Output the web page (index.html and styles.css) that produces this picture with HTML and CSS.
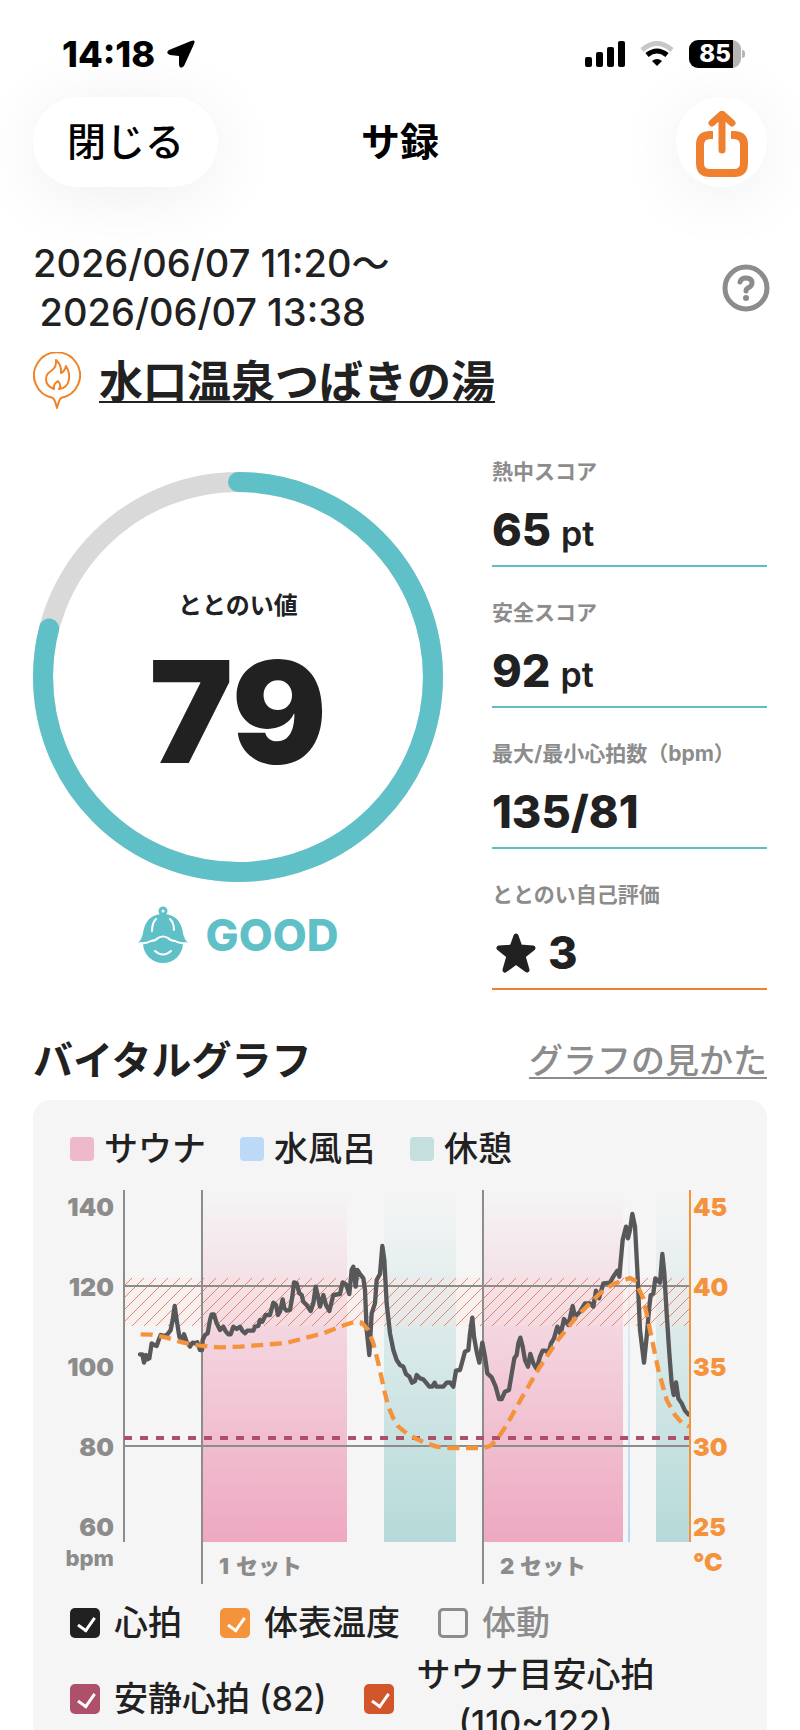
FILE: index.html
```html
<!DOCTYPE html>
<html lang="ja">
<head>
  <meta charset="UTF-8">
  <meta name="viewport" content="width=device-width, initial-scale=1.0">
  <title>サ録</title>
  <link rel="stylesheet" href="styles.css">
</head>
<body>

  <!-- Status Bar -->
  <div class="status-bar">
    <div class="status-time">
      <span>14:18</span>
      <svg width="28" height="28" viewBox="0 0 28 28" aria-hidden="true">
        <path d="M2 10 L24 1 Q29 -1 27 4 L17 26 Q13 30 12 25 L12 16 L3 15 Q-2 13 2 10 Z"/>
      </svg>
    </div>
    <div class="status-icons">
      <svg width="40" height="26" viewBox="0 0 40 26" aria-hidden="true">
        <rect x="0" y="16" width="7" height="10" rx="2"/>
        <rect x="11" y="11" width="7" height="15" rx="2"/>
        <rect x="22" y="6" width="7" height="20" rx="2"/>
        <rect x="33" y="0" width="7" height="26" rx="2"/>
      </svg>
      <svg width="34" height="26" viewBox="0 0 34 26" fill="none" aria-hidden="true">
        <path d="M2 9 Q17 -4 32 9" stroke="#c8c8c8" stroke-width="5"/>
        <path d="M7 14 Q17 6 27 14" stroke="#000" stroke-width="5"/>
        <path d="M12 20 Q17 16 22 20 L17 25 Z" fill="#000"/>
      </svg>
      <div class="battery"><span class="battery-level">85</span></div>
    </div>
  </div>

  <!-- Navigation -->
  <header class="nav">
    <button class="nav-btn close-btn" type="button">閉じる</button>
    <h1 class="nav-title">サ録</h1>
    <button class="nav-btn share-btn" type="button" aria-label="共有">
      <svg width="52" height="66" viewBox="0 0 52 66" fill="none" stroke="#ef8030" aria-hidden="true">
        <path d="M17 24 H14 Q4 24 4 34 V52 Q4 62 14 62 H38 Q48 62 48 52 V34 Q48 24 38 24 H35" stroke-width="8"/>
        <path d="M26 39 V5 M16 12 L26 3 L36 12" stroke-width="7" stroke-linecap="round" stroke-linejoin="round"/>
      </svg>
    </button>
  </header>

  <main class="content">

    <!-- Visit Info -->
    <div class="visit">
      <p class="visit-date">2026/06/07 11:20～<br>&thinsp;2026/06/07 13:38</p>
      <button class="help-btn" type="button" aria-label="ヘルプ">
        <svg width="48" height="48" viewBox="0 0 48 48" fill="none" stroke="#8c8c8c" aria-hidden="true">
          <circle cx="24" cy="24" r="21" stroke-width="5"/>
          <path d="M18 18 Q19 14 24 14 Q30 14 30 19 Q30 22 26 24 Q24 25 24 27" stroke-width="5" stroke-linecap="round"/>
          <circle cx="24" cy="34" r="3" fill="#8c8c8c" stroke="none"/>
        </svg>
      </button>
    </div>
    <div class="place">
      <svg width="48" height="57" viewBox="0 0 48 57" fill="none" stroke="#f08228" stroke-width="2" stroke-linejoin="round" aria-hidden="true">
        <path d="M20 46 A23 23 0 1 1 28 46 Q26 48 24 56 Q22 48 20 46 Z"/>
        <path d="M23 8 Q29 13 28 21 Q32 19 33 14 Q37 21 36 27 Q35 36 26 37 Q29 34 25 29 Q20 32 21 37 Q13 34 13 27 Q13 22 18 19 Q24 15 23 8 Z"/>
      </svg>
      <a class="place-link" href="#">水口温泉つばきの湯</a>
    </div>

    <!-- Score -->
    <section class="score">
      <div class="score-main">
        <div class="ring">
          <svg class="ring-svg" viewBox="0 0 410 410" fill="none" stroke-width="20" aria-hidden="true">
            <circle cx="205" cy="205" r="195" stroke="#d9d9d9"/>
            <circle cx="205" cy="205" r="195" stroke="#5fc0c7" stroke-linecap="round" pathLength="100" stroke-dasharray="79 100" transform="rotate(-90 205 205)"/>
          </svg>
          <div class="ring-text">
            <span class="ring-label">ととのい値</span>
            <span class="ring-value">79</span>
          </div>
        </div>
        <div class="rank">
          <svg width="50" height="58" viewBox="0 0 50 58" fill="none" stroke-linecap="round" aria-hidden="true">
            <circle cx="25" cy="37" r="20" fill="#5fc0c7"/>
            <path d="M0 37 Q4 33 5 27 Q8 8 25 8 Q42 8 45 27 Q46 33 50 37 L44 37 Q38 36 34 33 Q28 31 25 31 Q22 31 16 33 Q12 36 6 37 Z" fill="#5fc0c7"/>
            <path d="M2 37 Q8 38 13 35 Q17 35 20 32 Q25 29 30 32 Q33 35 37 35 Q42 38 48 37" stroke="#fff" stroke-width="2"/>
            <path d="M18 13 Q14 17 14 25 M32 13 Q36 17 36 24" stroke="#fff" stroke-width="2"/>
            <path d="M17 45 Q25 52 33 45" stroke="#fff" stroke-width="2"/>
            <circle cx="25" cy="5" r="3" stroke="#5fc0c7" stroke-width="3"/>
          </svg>
          <span>GOOD</span>
        </div>
      </div>

      <dl class="stats">
        <div class="stat">
          <dt>熱中スコア</dt>
          <dd>65 <small>pt</small></dd>
        </div>
        <div class="stat">
          <dt>安全スコア</dt>
          <dd>92 <small>pt</small></dd>
        </div>
        <div class="stat">
          <dt>最大/最小心拍数（bpm）</dt>
          <dd>135/81</dd>
        </div>
        <div class="stat stat-self">
          <dt>ととのい自己評価</dt>
          <dd>
            <svg width="46" height="42" viewBox="0 0 46 42" fill="#212121" stroke="#212121" stroke-width="5" stroke-linejoin="round" aria-hidden="true">
              <path d="M24 4 L28 15 L41 16 L31 24 L35 38 L24 30 L13 38 L17 24 L7 16 L20 15 Z"/>
            </svg>
            3
          </dd>
        </div>
      </dl>
    </section>

    <!-- Vital Graph -->
    <section class="vital">
      <div class="vital-head">
        <h2>バイタルグラフ</h2>
        <a href="#">グラフの見かた</a>
      </div>

      <div class="panel">
        <ul class="legend">
          <li><span class="swatch sauna"></span>サウナ</li>
          <li><span class="swatch water"></span>水風呂</li>
          <li><span class="swatch rest"></span>休憩</li>
        </ul>

        <svg class="chart" viewBox="0 0 661 400" role="img" aria-label="バイタルグラフ">
          <defs>
            <linearGradient id="pink" x1="0" y1="0" x2="0" y2="1">
              <stop offset="0" stop-color="#f1a5bf" stop-opacity="0"/>
              <stop offset="1" stop-color="#eea8c1"/>
            </linearGradient>
            <linearGradient id="teal" x1="0" y1="0" x2="0" y2="1">
              <stop offset="0" stop-color="#b5dad9" stop-opacity="0"/>
              <stop offset="1" stop-color="#b5dad9"/>
            </linearGradient>
            <linearGradient id="blue" x1="0" y1="0" x2="0" y2="1">
              <stop offset="0" stop-color="#b4d6f5" stop-opacity="0"/>
              <stop offset="1" stop-color="#b4d6f5"/>
            </linearGradient>
            <pattern id="hatch" width="12" height="12" patternUnits="userSpaceOnUse">
              <path d="M-3 3 L3 -3 M0 12 L12 0 M9 15 L15 9" stroke="#d9714f" stroke-width="1"/>
            </pattern>
          </defs>

          <!-- stages -->
          <rect x="133" y="6" width="144" height="352" fill="url(#pink)"/>
          <rect x="314" y="6" width="72" height="352" fill="url(#teal)"/>
          <rect x="414" y="6" width="139" height="352" fill="url(#pink)"/>
          <rect x="558" y="6" width="2" height="352" fill="url(#blue)"/>
          <rect x="586" y="6" width="34" height="352" fill="url(#teal)"/>

          <!-- target heart rate and grid -->
          <rect x="54" y="94" width="566" height="48" fill="#fbe6e0" opacity="0.3"/>
          <rect x="54" y="94" width="566" height="48" fill="url(#hatch)" opacity="0.8"/>
          <path class="grid-line" d="M54 102 H620 M54 262 H620"/>
          <path class="axis-line" d="M54 6 V358 M132 6 V400 M413 6 V400"/>
          <path class="rest-line" d="M54 254 H620"/>

          <!-- measured lines, three units to a chart unit -->
          <svg x="0" y="0" width="661" height="400" viewBox="90 42 1983 1200">
            <polyline class="heart-line" points="300,553 307,553 312,578 318,555 322,568 328,565 335,520 343,525 350,528 356,510 362,495 370,497 378,496 385,490 392,480 398,450 404,408 410,450 418,500 425,510 432,493 440,515 450,530 458,518 465,520 472,517 480,540 486,540 488,510 495,495 503,490 510,450 515,433 522,433 530,460 540,480 550,470 558,485 565,493 572,493 580,470 590,477 600,470 607,482 615,490 622,482 640,482 645,470 655,468 660,450 667,455 677,435 690,435 700,398 708,405 714,435 720,425 728,388 733,415 740,422 750,420 757,380 762,337 770,340 778,370 785,375 790,395 800,405 812,423 820,400 827,350 833,375 840,410 850,375 858,405 868,423 880,375 900,372 908,337 918,343 928,372 935,300 940,290 947,350 952,300 960,312 970,325 975,360 980,480 988,555 995,430 1005,400 1010,330 1020,312 1027,228 1033,270 1040,400 1050,490 1060,540 1070,570 1080,585 1090,590 1098,612 1108,620 1116,638 1125,633 1130,615 1140,625 1150,628 1160,640 1168,650 1177,650 1184,638 1190,650 1210,650 1220,638 1230,637 1240,650 1248,602 1260,600 1275,545 1285,540 1290,490 1297,443 1302,500 1310,545 1318,578 1327,518 1335,560 1342,610 1355,622 1367,650 1377,687 1385,687 1395,665 1407,660 1417,600 1423,565 1430,555 1435,520 1441,503 1448,530 1455,570 1464,590 1471,552 1480,580 1490,597 1500,560 1508,542 1517,542 1525,550 1533,520 1542,505 1552,470 1562,492 1572,447 1585,465 1598,408 1605,440 1620,425 1635,400 1650,400 1660,410 1668,362 1677,385 1690,340 1710,338 1720,320 1732,302 1738,320 1748,210 1758,170 1764,205 1770,180 1777,132 1785,170 1792,300 1800,480 1812,578 1820,500 1828,410 1832,375 1840,370 1846,325 1860,338 1867,252 1873,310 1880,430 1888,550 1895,640 1901,675 1908,637 1915,685 1925,700 1935,722 1945,733"/>
            <polyline class="temp-line" points="302,493 335,494 380,503 430,518 480,527 540,532 600,530 650,526 700,522 740,519 790,505 850,490 900,470 945,455 965,458 985,480 1000,520 1015,580 1035,670 1045,710 1060,745 1075,770 1100,790 1130,807 1160,820 1190,830 1230,834 1330,834 1350,828 1370,810 1400,765 1450,675 1500,590 1550,515 1610,440 1680,370 1720,342 1770,324 1785,332 1810,385 1830,480 1855,600 1880,690 1905,735 1925,758 1948,770"/>
          </svg>
          <path class="temp-axis" d="M620 6 V358"/>

          <g class="tick" text-anchor="end">
            <text x="44" y="32">140</text>
            <text x="44" y="112">120</text>
            <text x="44" y="192">100</text>
            <text x="44" y="272">80</text>
            <text x="44" y="352">60</text>
            <text class="unit" x="44" y="382">bpm</text>
          </g>
          <g class="tick temp-tick">
            <text x="623" y="32">45</text>
            <text x="623" y="112">40</text>
            <text x="623" y="192">35</text>
            <text x="623" y="272">30</text>
            <text x="623" y="352">25</text>
            <text x="623" y="387">°C</text>
          </g>
          <g class="tick set-tick">
            <text x="149" y="390">1</text>
            <text x="166" y="390">セット</text>
            <text x="430" y="390">2</text>
            <text x="450" y="390">セット</text>
          </g>
        </svg>

        <form class="toggles">
          <div class="toggle-row">
            <label class="toggle"><input type="checkbox" class="check heart" checked>心拍</label>
            <label class="toggle"><input type="checkbox" class="check temp" checked>体表温度</label>
            <label class="toggle muted"><input type="checkbox" class="check">体動</label>
          </div>
          <div class="toggle-row">
            <label class="toggle"><input type="checkbox" class="check calm" checked>安静心拍 (82)</label>
            <label class="toggle"><input type="checkbox" class="check target" checked><span class="two-line">サウナ目安心拍<br>(110~122)</span></label>
          </div>
        </form>
      </div>
    </section>

  </main>

</body>
</html>
```
FILE: styles.css
```css
/* Basic Reset */
* {
  margin: 0;
  padding: 0;
  box-sizing: border-box;
}

/* Body Styling */
body {
  background-color: #fff;
  color: #212121;
  font-family: Inter, "Noto Sans CJK JP", sans-serif;
  height: 100vh;
  overflow: hidden;
}

svg {
  display: block;
  flex: none;
}

button {
  border: none;
  background: none;
  font-family: inherit;
  cursor: pointer;
}

/* Status Bar */
.status-bar {
  display: flex;
  justify-content: space-between;
  align-items: center;
  height: 97px;
  padding: 10px 59px 0 62px;
  color: #000;
}

.status-time {
  display: flex;
  align-items: center;
  gap: 12px;
  font-size: 36px;
  font-weight: 800;
}

.status-icons {
  display: flex;
  align-items: center;
  gap: 15px;
}

.battery {
  position: relative;
  width: 52px;
  height: 28px;
  border-radius: 9px;
  background: linear-gradient(to right, #000 85%, #b5b5b5 85%);
  text-align: center;
}

.battery::after {
  content: "";
  position: absolute;
  top: 10px;
  right: -4px;
  width: 3px;
  height: 8px;
  border-radius: 0 3px 3px 0;
  background-color: #b5b5b5;
}

.battery-level {
  display: block;
  color: #fff;
  font-size: 24px;
  font-weight: 800;
  line-height: 28px;
}

/* Navigation */
.nav {
  display: grid;
  grid-template-columns: 1fr auto 1fr;
  align-items: center;
  padding: 0 33px;
}

.nav-btn {
  height: 90px;
  border-radius: 45px;
  background-color: #fff;
  box-shadow: 0 8px 70px rgba(0, 0, 0, 0.07);
}

.close-btn {
  width: 185px;
  padding-bottom: 6px;
  color: #000;
  font-size: 39px;
  font-weight: 500;
}

.nav-title {
  padding-bottom: 6px;
  color: #000;
  font-size: 39px;
  font-weight: 700;
}

.share-btn {
  display: flex;
  justify-content: center;
  align-items: center;
  justify-self: end;
  width: 91px;
  padding-top: 3px;
}

/* Visit Info */
.content {
  padding: 52px 33px 0;
}

.visit {
  display: flex;
  justify-content: space-between;
  align-items: center;
}

.visit-date {
  font-size: 38px;
  font-weight: 500;
  line-height: 49px;
}

.help-btn {
  margin-right: -3px;
}

.place {
  display: flex;
  align-items: center;
  gap: 18px;
  margin-top: 15px;
}

.place-link {
  padding-top: 4px;
  color: #212121;
  font-size: 44px;
  font-weight: 700;
  line-height: 53px;
  text-decoration-thickness: 2px;
  text-underline-offset: 3px;
  text-decoration-skip-ink: none;
}

/* Score */
.score {
  display: flex;
  gap: 49px;
  margin-top: 50px;
}

.ring {
  display: grid;
  width: 410px;
  margin-top: 13px;
}

.ring-svg,
.ring-text {
  grid-area: 1 / 1;
}

.ring-text {
  display: flex;
  flex-direction: column;
  align-items: center;
  padding-top: 116px;
}

.ring-label {
  font-size: 24px;
  font-weight: 700;
  line-height: 36px;
}

.ring-value {
  font-size: 141px;
  font-weight: 900;
  line-height: 176px;
}

.rank {
  display: flex;
  justify-content: center;
  align-items: center;
  gap: 18px;
  margin-top: 24px;
  color: #5fc0c7;
  font-size: 44px;
  font-weight: 800;
  line-height: 58px;
}

.stats {
  display: grid;
  flex: 1;
  align-content: start;
  gap: 33px;
}

.stat {
  height: 108px;
  border-bottom: 2px solid #5bbfc3;
}

.stat-self {
  border-color: #ef8030;
}

.stat dt {
  color: #8c8c8c;
  font-size: 21px;
  font-weight: 700;
  line-height: 26px;
  white-space: nowrap;
}

.stat dd {
  display: flex;
  align-items: baseline;
  gap: 10px;
  margin-top: 15px;
  font-size: 45px;
  font-weight: 800;
  line-height: 60px;
}

.stat dd svg {
  align-self: center;
}

.stat small {
  font-size: 34px;
  font-weight: 600;
}

/* Vital Graph */
.vital {
  margin-top: 46px;
}

.vital-head {
  display: flex;
  justify-content: space-between;
  align-items: center;
  line-height: 50px;
}

.vital-head h2 {
  font-size: 40px;
  font-weight: 700;
}

.vital-head a {
  color: #8c8c8c;
  font-size: 34px;
  font-weight: 500;
  text-decoration-thickness: 2px;
  text-underline-offset: 4px;
  text-decoration-skip-ink: none;
}

.panel {
  margin-top: 14px;
  padding: 25px 36px 30px 37px;
  border-radius: 18px;
  background-color: #f5f5f5;
}

.legend {
  display: flex;
  gap: 34px;
  list-style: none;
  font-size: 34px;
  font-weight: 500;
  line-height: 48px;
}

.legend li {
  display: flex;
  align-items: center;
  gap: 10px;
}

.swatch {
  width: 24px;
  height: 24px;
  border-radius: 4px;
}

.swatch.sauna {
  background-color: #efb9cc;
}

.swatch.water {
  background-color: #bcd9f7;
}

.swatch.rest {
  background-color: #c5dfdf;
}

/* Chart */
.chart {
  width: 100%;
  margin-top: 11px;
  overflow: visible;
}

.grid-line,
.axis-line,
.rest-line,
.temp-axis {
  fill: none;
  stroke: #8c8c8c;
  stroke-width: 2;
}

.rest-line {
  stroke: #ae5069;
  stroke-width: 4;
  stroke-dasharray: 8 8;
}

.temp-axis {
  stroke: #f5923c;
}

.heart-line,
.temp-line {
  fill: none;
  stroke: #58585a;
  stroke-width: 13;
  stroke-linejoin: round;
  stroke-linecap: round;
}

.temp-line {
  stroke: #f5923c;
  stroke-dasharray: 36 20;
  stroke-linecap: butt;
}

.tick {
  fill: #8c8c8c;
  font-size: 25px;
  font-weight: 900;
}

.unit {
  font-size: 22px;
  font-weight: 800;
}

.temp-tick {
  fill: #f5923c;
}

.set-tick {
  font-size: 22px;
}

/* Toggles */
.toggles {
  display: flex;
  flex-direction: column;
  gap: 4px;
  margin-top: 15px;
  font-size: 34px;
  font-weight: 500;
  line-height: 48px;
}

.toggle-row {
  display: flex;
  align-items: center;
  gap: 38px;
}

.toggle {
  display: flex;
  align-items: center;
  gap: 14px;
}

.muted {
  color: #8c8c8c;
}

.two-line {
  padding: 0 8px;
  text-align: center;
}

.check {
  position: relative;
  appearance: none;
  width: 30px;
  height: 30px;
  border: 3px solid #8c8c8c;
  border-radius: 5px;
}

.check:checked {
  border: none;
}

.check:checked::after {
  content: "";
  position: absolute;
  top: 6px;
  left: 11px;
  width: 8px;
  height: 14px;
  border: solid #fff;
  border-width: 0 3px 3px 0;
  transform: rotate(35deg);
}

.check.heart {
  background-color: #212121;
}

.check.temp {
  background-color: #f5923c;
}

.check.calm {
  background-color: #ae5069;
}

.check.target {
  background-color: #d2562b;
}
```
